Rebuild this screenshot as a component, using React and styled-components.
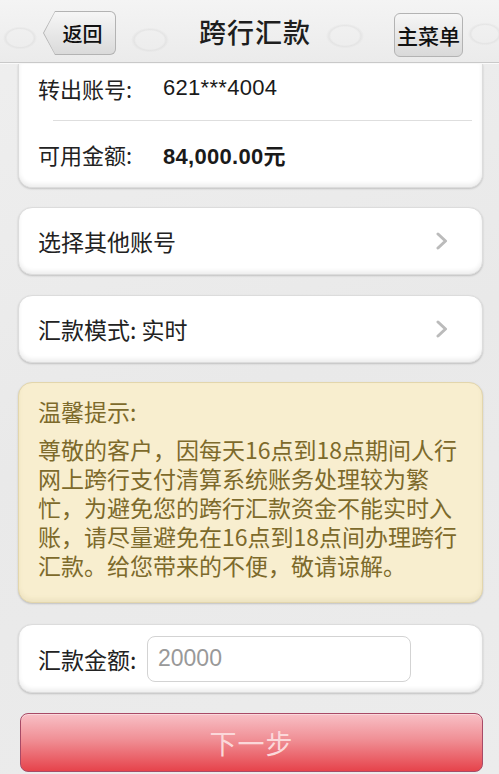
import React from 'react';
import styled, { createGlobalStyle } from 'styled-components';

const GlobalStyle = createGlobalStyle`
  html, body {
    margin: 0;
    padding: 0;
    background: #ebebeb;
  }
  body {
    font-family: "Noto Sans CJK SC", "Noto Sans", sans-serif;
    color: #222;
  }
`;

const Page = styled.div`
  width: 499px;
  height: 774px;
  overflow: hidden;
  background: linear-gradient(160deg, #efefef 0%, #e9e9e9 50%, #ececec 100%);
`;

// faint cloud texture behind the nav bar
const Header = styled.header`
  height: 62px;
  display: flex;
  align-items: center;
  justify-content: space-between;
  padding: 0 36px 0 43px;
  border-bottom: 1px solid #c9c9c9;
  box-shadow: 0 1px 0 #fafafa;
  background:
    radial-gradient(ellipse 18px 12px at 20px 38px, transparent 70%, rgba(210,210,210,0.35) 80%, transparent 95%),
    radial-gradient(ellipse 20px 13px at 150px 40px, transparent 70%, rgba(210,210,210,0.35) 80%, transparent 95%),
    radial-gradient(ellipse 20px 13px at 345px 36px, transparent 70%, rgba(210,210,210,0.35) 80%, transparent 95%),
    radial-gradient(ellipse 18px 12px at 485px 34px, transparent 70%, rgba(210,210,210,0.35) 80%, transparent 95%),
    linear-gradient(#f4f4f4, #ebebeb);
`;

const Title = styled.h1`
  margin: 0;
  font-size: 27px;
  font-weight: 500;
  color: #1e1e1e;
  letter-spacing: 1px;
`;

const BackButton = styled.button`
  position: relative;
  width: 73px;
  height: 44px;
  margin-top: 4px;
  padding: 0 0 0 6px;
  border: none;
  background: #b3b3b3;
  border-radius: 0 6px 6px 0;
  clip-path: polygon(12px 0, 100% 0, 100% 100%, 12px 100%, 0 50%);
  font: inherit;
  font-size: 20px;
  font-weight: 500;
  color: #111;
  &::before {
    content: '';
    position: absolute;
    inset: 1px;
    border-radius: 0 5px 5px 0;
    background: linear-gradient(#f6f6f6, #dadada);
    clip-path: polygon(11px 0, 100% 0, 100% 100%, 11px 100%, 0 50%);
  }
`;

const MenuButton = styled.button`
  width: 69px;
  height: 44px;
  margin-top: 8px;
  padding: 0;
  border: 1px solid #b3b3b3;
  border-radius: 6px;
  background: linear-gradient(#f6f6f6, #d9d9d9);
  font: inherit;
  font-size: 21px;
  font-weight: 500;
  color: #111;
`;

const Label = styled.span`
  position: relative;
`;

const Content = styled.main`
  display: flex;
  flex-direction: column;
  padding: 0 16px 0 18px;
`;

const Card = styled.section`
  background: #fff;
  border: 1px solid #dcdcdc;
  border-radius: ${p => (p.$cut ? '0 0 14px 14px' : '14px')};
  border-top-width: ${p => (p.$cut ? 0 : 1)}px;
  box-shadow: inset 0 -3px 4px rgba(0, 0, 0, 0.07), 0 1px 2px rgba(0, 0, 0, 0.18);
  margin-top: ${p => p.$gap || 0}px;
  padding: 0 0 0 19px;
`;

const Row = styled.div`
  display: flex;
  align-items: center;
  height: ${p => p.$h}px;
  padding-bottom: ${p => p.$pb || 0}px;
  box-sizing: border-box;
  font-size: 22px;
`;

const Key = styled.span`
  width: 125px;
  flex: none;
  color: #222;
`;

const Value = styled.span`
  font-family: "Liberation Sans", "Noto Sans CJK SC", sans-serif;
  font-size: 22px;
  font-weight: ${p => (p.$bold ? 700 : 400)};
  color: #1a1a1a;
  letter-spacing: 0.3px;
`;

const Unit = styled.span`
  font-family: "Noto Sans CJK SC", sans-serif;
  font-weight: 700;
`;

const Divider = styled.div`
  height: 1px;
  margin: 0 10px 0 15px;
  background: #dedede;
`;

const NavRow = styled.div`
  display: flex;
  align-items: center;
  justify-content: space-between;
  height: 66px;
  padding-right: 34px;
  font-size: 23px;
`;

const Chevron = () => (
  <svg width="12" height="18" viewBox="0 0 12 18">
    <path d="M2 2 L9.5 9 L2 16" fill="none" stroke="#bbbbbb" strokeWidth="3" strokeLinecap="round" strokeLinejoin="round" />
  </svg>
);

const Tip = styled.section`
  margin-top: 19px;
  padding: 14px 18px 22px 19px;
  background: #f8eecf;
  border: 1px solid #e3d6ac;
  border-radius: 14px;
  box-shadow: inset 0 -3px 4px rgba(120, 100, 40, 0.08), 0 1px 2px rgba(0, 0, 0, 0.18);
  color: #7d6a2b;
  font-size: 23px;
  line-height: 29px;
`;

const TipTitle = styled.div`
  margin-bottom: 9px;
`;

const TipText = styled.p`
  margin: 0;
  line-break: strict;
`;

const AmountRow = styled.div`
  display: flex;
  align-items: center;
  height: 67px;
  font-size: 23px;
`;

const AmountLabel = styled.label`
  width: 109px;
  flex: none;
`;

const AmountInput = styled.input`
  width: 264px;
  height: 46px;
  box-sizing: border-box;
  border: 1px solid #d3d3d3;
  border-radius: 8px;
  padding: 0 10px;
  font-family: "Liberation Sans", sans-serif;
  font-size: 23px;
  color: #333;
  background: #fff;
  outline: none;
  &::placeholder {
    color: #999;
  }
`;

const NextButton = styled.button`
  margin: 20px 0 0 2px;
  height: 59px;
  border: 1px solid #a84a66;
  border-radius: 8px;
  background: linear-gradient(#f8c0c6 0%, #f08f95 45%, #e6434b 100%);
  box-shadow: inset 0 1px 0 rgba(255, 255, 255, 0.4);
  font: inherit;
  font-size: 27px;
  color: #fbd8da;
  letter-spacing: 1px;
`;

export default function App() {
  return (
    <Page>
      <GlobalStyle />
      <Header>
        <BackButton><Label>返回</Label></BackButton>
        <Title>跨行汇款</Title>
        <MenuButton>主菜单</MenuButton>
      </Header>
      <Content>
        <Card $cut $gap={1}>
          <Row $h={56} $pb={8}>
            <Key>转出账号:</Key>
            <Value>621***4004</Value>
          </Row>
          <Divider />
          <Row $h={66}>
            <Key>可用金额:</Key>
            <Value $bold>84,000.00<Unit>元</Unit></Value>
          </Row>
        </Card>
        <Card $gap={19}>
          <NavRow>
            <span>选择其他账号</span>
            <Chevron />
          </NavRow>
        </Card>
        <Card $gap={20}>
          <NavRow>
            <span>汇款模式: 实时</span>
            <Chevron />
          </NavRow>
        </Card>
        <Tip>
          <TipTitle>温馨提示:</TipTitle>
          <TipText>
            尊敬的客户，因每天16点到18点期间人行网上跨行支付清算系统账务处理较为繁忙，为避免您的跨行汇款资金不能实时入账，请尽量避免在16点到18点间办理跨行汇款。给您带来的不便，敬请谅解。
          </TipText>
        </Tip>
        <Card $gap={21}>
          <AmountRow>
            <AmountLabel>汇款金额:</AmountLabel>
            <AmountInput placeholder="20000" />
          </AmountRow>
        </Card>
        <NextButton>下一步</NextButton>
      </Content>
    </Page>
  );
}
